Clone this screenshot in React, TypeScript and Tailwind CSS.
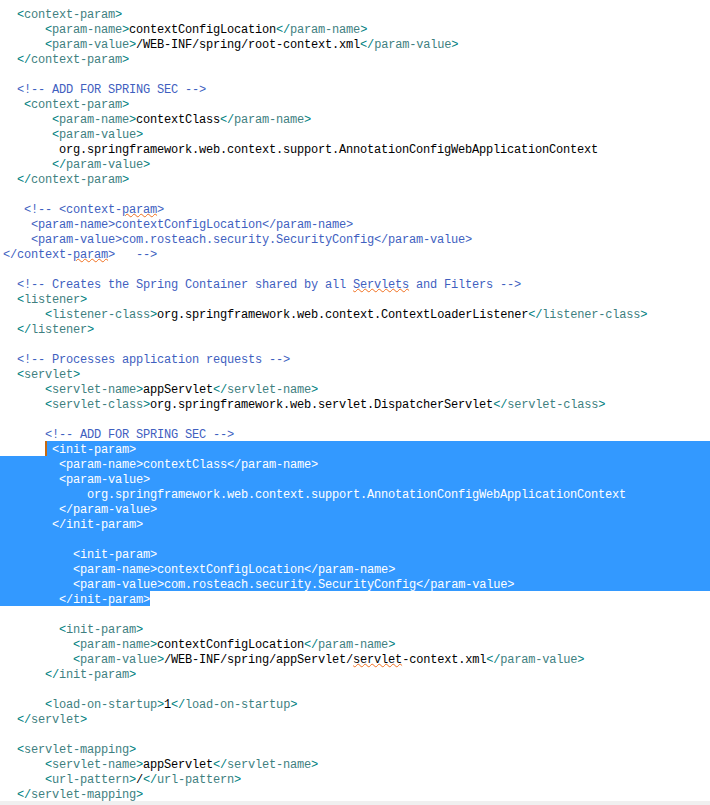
import React from "react";

type Kind = "code" | "comment";
type Sel = "none" | "full" | "start" | "end";

const LINES: { t: string; k?: Kind; s?: Sel }[] = [
  { t: "  <context-param>" },
  { t: "      <param-name>contextConfigLocation</param-name>" },
  { t: "      <param-value>/WEB-INF/spring/root-context.xml</param-value>" },
  { t: "  </context-param>" },
  { t: "" },
  { t: "  <!-- ADD FOR SPRING SEC -->", k: "comment" },
  { t: "   <context-param>" },
  { t: "       <param-name>contextClass</param-name>" },
  { t: "       <param-value>" },
  { t: "        org.springframework.web.context.support.AnnotationConfigWebApplicationContext" },
  { t: "       </param-value>" },
  { t: "  </context-param>" },
  { t: "" },
  { t: "   <!-- <context-~param~>", k: "comment" },
  { t: "    <param-name>contextConfigLocation</param-name>", k: "comment" },
  { t: "    <param-value>com.rosteach.security.SecurityConfig</param-value>", k: "comment" },
  { t: "</context-~param~>   -->", k: "comment" },
  { t: "" },
  { t: "  <!-- Creates the Spring Container shared by all ~Servlets~ and Filters -->", k: "comment" },
  { t: "  <listener>" },
  { t: "      <listener-class>org.springframework.web.context.ContextLoaderListener</listener-class>" },
  { t: "  </listener>" },
  { t: "" },
  { t: "  <!-- Processes application requests -->", k: "comment" },
  { t: "  <servlet>" },
  { t: "      <servlet-name>appServlet</servlet-name>" },
  { t: "      <servlet-class>org.springframework.web.servlet.DispatcherServlet</servlet-class>" },
  { t: "" },
  { t: "      <!-- ADD FOR SPRING SEC -->", k: "comment" },
  { t: "       <init-param>", s: "start" },
  { t: "        <param-name>contextClass</param-name>", s: "full" },
  { t: "        <param-value>", s: "full" },
  { t: "            org.springframework.web.context.support.AnnotationConfigWebApplicationContext", s: "full" },
  { t: "        </param-value>", s: "full" },
  { t: "       </init-param>", s: "full" },
  { t: "", s: "full" },
  { t: "          <init-param>", s: "full" },
  { t: "          <param-name>contextConfigLocation</param-name>", s: "full" },
  { t: "          <param-value>com.rosteach.security.SecurityConfig</param-value>", s: "full" },
  { t: "        </init-param>", s: "end" },
  { t: "" },
  { t: "        <init-param>" },
  { t: "          <param-name>contextConfigLocation</param-name>" },
  { t: "          <param-value>/WEB-INF/spring/appServlet/~servlet~-context.xml</param-value>" },
  { t: "      </init-param>" },
  { t: "" },
  { t: "      <load-on-startup>1</load-on-startup>" },
  { t: "  </servlet>" },
  { t: "" },
  { t: "  <servlet-mapping>" },
  { t: "      <servlet-name>appServlet</servlet-name>" },
  { t: "      <url-pattern>/</url-pattern>" },
  { t: "  </servlet-mapping>" },
];

type Tok = { text: string; c: "br" | "tag" | "txt" | "cm" };

function tokenize(s: string, kind: Kind): Tok[] {
  if (kind === "comment") return [{ text: s, c: "cm" }];
  const out: Tok[] = [];
  let i = 0;
  while (i < s.length) {
    if (s[i] === "<") {
      const br = s[i + 1] === "/" ? "</" : "<";
      out.push({ text: br, c: "br" });
      i += br.length;
      let j = i;
      while (j < s.length && s[j] !== ">") j++;
      out.push({ text: s.slice(i, j), c: "tag" });
      if (j < s.length) out.push({ text: ">", c: "br" });
      i = j + 1;
    } else {
      let j = i;
      while (j < s.length && s[j] !== "<") j++;
      out.push({ text: s.slice(i, j), c: "txt" });
      i = j;
    }
  }
  return out;
}

const COLORS: Record<Tok["c"], string> = {
  br: "text-[#008080]",
  tag: "text-[#3f7f7f]",
  txt: "text-black",
  cm: "text-[#3f5fbf]",
};

function renderText(s: string, kind: Kind, selected: boolean) {
  const toks = tokenize(s, kind);
  const nodes: React.ReactNode[] = [];
  let squig = false;
  let key = 0;
  for (const tk of toks) {
    const parts = tk.text.split("~");
    parts.forEach((p, idx) => {
      if (idx > 0) squig = !squig;
      if (!p) return;
      const color = selected ? "text-white" : COLORS[tk.c];
      nodes.push(
        <span
          key={key++}
          className={
            color +
            (squig
              ? " underline decoration-wavy decoration-[#f07020] decoration-1 underline-offset-0"
              : "")
          }
        >
          {p}
        </span>
      );
    });
  }
  return nodes;
}

function Line({ t, k = "code", s = "none" }: { t: string; k?: Kind; s?: Sel }) {
  if (s === "full") {
    return (
      <div className="h-[15px] bg-[#3399ff] pl-[3px] pt-[3px] whitespace-pre">
        {renderText(t, k, true)}
      </div>
    );
  }
  if (s === "start") {
    const lead = t.slice(0, 6);
    const rest = t.slice(6);
    return (
      <div className="flex h-[15px] whitespace-pre">
        <span className="pl-[3px] pt-[3px]">{lead}</span>
        <span className="relative flex-1 bg-[#3399ff] pt-[3px]">
          <span className="absolute left-0 top-0 h-full w-[2px] bg-[#c86a10]" />
          {renderText(rest, k, true)}
        </span>
      </div>
    );
  }
  if (s === "end") {
    return (
      <div className="flex h-[15px] whitespace-pre">
        <span className="bg-[#3399ff] pl-[3px] pt-[3px]">{renderText(t, k, true)}</span>
      </div>
    );
  }
  return (
    <div className="h-[15px] pl-[3px] pt-[3px] whitespace-pre">{renderText(t, k, false)}</div>
  );
}

export default function App() {
  return (
    <div className="h-[805px] w-[710px] overflow-hidden bg-white">
      <div
        className="pt-[6px] text-[12px] leading-[12px] tracking-[-0.2px]"
        style={{ fontFamily: '"Liberation Mono", "DejaVu Sans Mono", monospace' }}
      >
        {LINES.map((l, i) => (
          <Line key={i} t={l.t} k={l.k} s={l.s} />
        ))}
      </div>
      <div className="h-[20px] bg-[#f0f0f0]" />
    </div>
  );
}
